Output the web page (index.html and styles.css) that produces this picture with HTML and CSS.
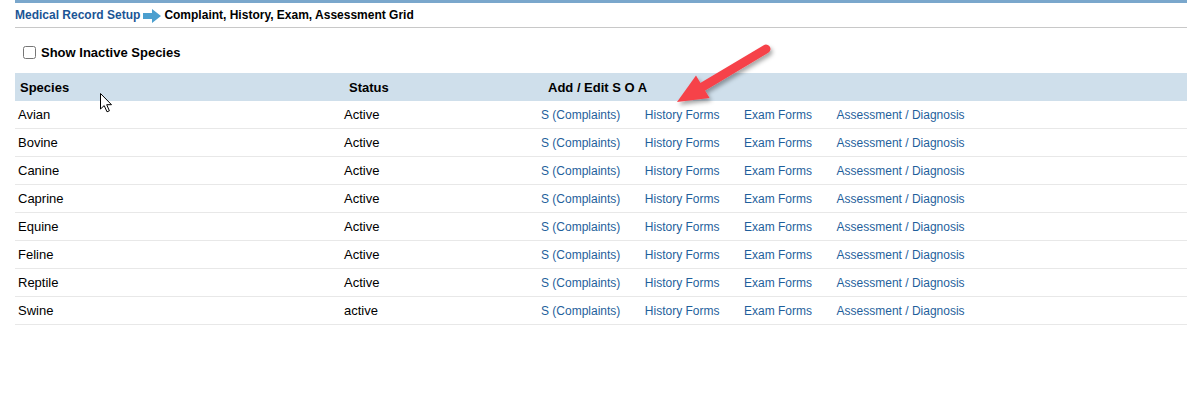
FILE: index.html
```html
<!DOCTYPE html>
<html>
<head>
<meta charset="utf-8">
<link rel="stylesheet" href="styles.css">
</head>
<body>
<div class="page">
  <div class="breadcrumb">
    <a class="crumb-link" href="#">Medical Record Setup</a>
    <svg class="crumb-arrow" width="18" height="14" viewBox="0 0 18 14"><path d="M0 4 H9 V0 L18 7 L9 14 V10 H0 Z" fill="#4b9fcf"/></svg>
    <span class="crumb-current">Complaint, History, Exam, Assessment Grid</span>
  </div>

  <label class="toggle"><input type="checkbox" class="toggle-box"><span>Show Inactive Species</span></label>

  <div class="grid">
    <div class="row head">
      <div class="cell c-species">Species</div>
      <div class="cell c-status">Status</div>
      <div class="cell c-soa">Add / Edit S O A</div>
    </div>
    <div class="row"><div class="cell c-species">Avian</div><div class="cell c-status">Active</div><div class="cell c-soa links"><a href="#">S (Complaints)</a><a href="#">History Forms</a><a href="#">Exam Forms</a><a href="#">Assessment / Diagnosis</a></div></div>
    <div class="row"><div class="cell c-species">Bovine</div><div class="cell c-status">Active</div><div class="cell c-soa links"><a href="#">S (Complaints)</a><a href="#">History Forms</a><a href="#">Exam Forms</a><a href="#">Assessment / Diagnosis</a></div></div>
    <div class="row"><div class="cell c-species">Canine</div><div class="cell c-status">Active</div><div class="cell c-soa links"><a href="#">S (Complaints)</a><a href="#">History Forms</a><a href="#">Exam Forms</a><a href="#">Assessment / Diagnosis</a></div></div>
    <div class="row"><div class="cell c-species">Caprine</div><div class="cell c-status">Active</div><div class="cell c-soa links"><a href="#">S (Complaints)</a><a href="#">History Forms</a><a href="#">Exam Forms</a><a href="#">Assessment / Diagnosis</a></div></div>
    <div class="row"><div class="cell c-species">Equine</div><div class="cell c-status">Active</div><div class="cell c-soa links"><a href="#">S (Complaints)</a><a href="#">History Forms</a><a href="#">Exam Forms</a><a href="#">Assessment / Diagnosis</a></div></div>
    <div class="row"><div class="cell c-species">Feline</div><div class="cell c-status">Active</div><div class="cell c-soa links"><a href="#">S (Complaints)</a><a href="#">History Forms</a><a href="#">Exam Forms</a><a href="#">Assessment / Diagnosis</a></div></div>
    <div class="row"><div class="cell c-species">Reptile</div><div class="cell c-status">Active</div><div class="cell c-soa links"><a href="#">S (Complaints)</a><a href="#">History Forms</a><a href="#">Exam Forms</a><a href="#">Assessment / Diagnosis</a></div></div>
    <div class="row"><div class="cell c-species">Swine</div><div class="cell c-status">active</div><div class="cell c-soa links"><a href="#">S (Complaints)</a><a href="#">History Forms</a><a href="#">Exam Forms</a><a href="#">Assessment / Diagnosis</a></div></div>
  </div>

  <svg class="callout" width="1187" height="399" viewBox="0 0 1187 399">
    <defs>
      <filter id="sh" x="-20%" y="-20%" width="140%" height="140%">
        <feDropShadow dx="2" dy="3" stdDeviation="2" flood-color="#000" flood-opacity="0.35"/>
      </filter>
    </defs>
    <g filter="url(#sh)">
      <line x1="766" y1="49" x2="703" y2="86.6" stroke="#f6424a" stroke-width="9" stroke-linecap="round"/>
      <polygon points="677,102 696,75.4 709.6,98" fill="#f6424a"/>
    </g>
  </svg>
  <svg class="cursor" width="14" height="21" viewBox="0 0 14 21">
    <path d="M0.5 0.5 L0.5 16 L4.2 12.6 L7 18.8 L9.4 17.8 L6.7 11.7 L11.5 11.7 Z" fill="#fff" stroke="#000" stroke-width="1" stroke-linejoin="miter"/>
  </svg>
</div>
</body>
</html>
```

FILE: styles.css
```css
html, body {
  margin: 0;
  padding: 0;
  background: #fff;
}
body {
  font-family: "Liberation Sans", Arial, sans-serif;
  color: #000;
}
.page {
  position: relative;
  width: 1187px;
  height: 399px;
  padding-left: 15px;
  box-sizing: border-box;
  overflow: hidden;
}
.breadcrumb {
  display: flex;
  align-items: center;
  height: 24px;
  border-top: 3px solid #7aa7cc;
  border-bottom: 1px solid #c8c8c8;
  font-size: 12px;
  font-weight: bold;
  box-sizing: content-box;
}
.crumb-link {
  color: #1b5595;
  text-decoration: none;
}
.crumb-arrow {
  margin: 1px 3px 0 3px;
}
.crumb-current {
  color: #000;
}
.toggle {
  display: flex;
  align-items: center;
  height: 22px;
  margin-top: 13px;
  font-size: 13px;
  font-weight: bold;
}
.toggle-box {
  width: 13px;
  height: 13px;
  margin: 0 5px 0 8px;
}
.grid {
  margin-top: 10px;
}
.row {
  display: grid;
  grid-template-columns: 326px 197px 1fr;
  height: 27px;
  align-items: center;
  border-bottom: 1px solid #e8e8e8;
  font-size: 13px;
}
.row.head {
  height: 28px;
  background: #cfdfeb;
  border-bottom: none;
  font-weight: bold;
}
.cell {
  padding-left: 3px;
  white-space: nowrap;
}
.head .c-species { padding-left: 5px; }
.head .c-status { padding-left: 8px; }
.head .c-soa { padding-left: 10px; }
.links {
  display: flex;
  gap: 24.5px;
  font-size: 12px;
}
.links a {
  color: #1f5f9c;
  text-decoration: none;
}
.callout {
  position: absolute;
  left: 0;
  top: 0;
  pointer-events: none;
}
.cursor {
  position: absolute;
  left: 100px;
  top: 93px;
  pointer-events: none;
}
```
